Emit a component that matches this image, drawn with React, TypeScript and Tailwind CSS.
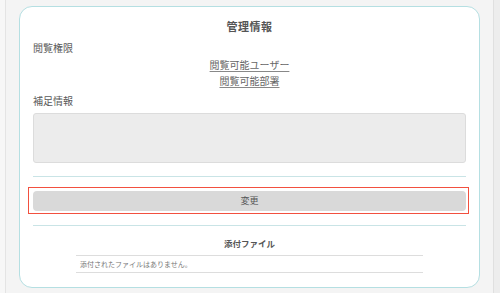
const font = { fontFamily: '"Noto Sans CJK JP", "Noto Sans", sans-serif' };

export default function App() {
  return (
    <div className="flex h-[293px] w-[500px] overflow-hidden bg-[#f4f4f4]" style={font}>
      <div className="w-[6px] shrink-0 border-r border-[#e4e4e4] bg-[#f7f7f7]" />
      <main className="w-[487px] shrink-0 px-[13px] pt-[6px]">
        <section className="rounded-[13px] border border-[#b5dfe2] bg-white px-[13px] pb-[14px]">
          <h2 className="mt-[9px] h-[20px] text-center text-[11px] font-semibold leading-[20px] tracking-[0.5px] text-[#555]">
            管理情報
          </h2>

          <div className="mt-[4px] h-[16px] text-[10px] leading-[16px] text-[#5a5a5a]">閲覧権限</div>
          <div className="mt-[1px] flex flex-col items-center text-[10px] leading-[16px] text-[#666]">
            <a className="underline decoration-[#888] underline-offset-2">閲覧可能ユーザー</a>
            <a className="underline decoration-[#888] underline-offset-2">閲覧可能部署</a>
          </div>

          <div className="mt-[4px] h-[16px] text-[10px] leading-[16px] text-[#5a5a5a]">補足情報</div>
          <div className="mt-[4px] h-[50px] rounded-[3px] border border-[#dcdcdc] bg-[#ececec]" />

          <div className="mt-[13px] border-t border-[#c9e4e6]" />

          <div className="relative mt-[14px]">
            <button className="flex h-[20px] w-full items-center justify-center rounded-[4px] bg-[#d9d9d9] text-[9px] text-[#555]">
              変更
            </button>
            <div className="pointer-events-none absolute -bottom-[3px] -left-[5px] -right-[3px] -top-[4px] border-[1.5px] border-[#f2503f]" />
          </div>

          <div className="mt-[14px] border-t border-[#c9e4e6]" />

          <div className="mt-[9px] h-[16px] text-center text-[8.5px] font-bold leading-[16px] text-[#555]">
            添付ファイル
          </div>
          <div className="mx-auto mt-[4px] flex h-[18px] w-[347px] items-center border-y border-[#dddddd] px-[4px] text-[7px] text-[#777]">
            添付されたファイルはありません。
          </div>
        </section>
      </main>
      <div className="flex-1 border-l border-[#e0e0e0] bg-[#ededed]" />
    </div>
  );
}
